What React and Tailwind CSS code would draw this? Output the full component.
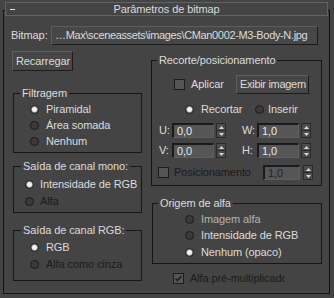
// Parâmetros de bitmap — 3ds Max style rollout, dark UI.

const DIM = 'text-[#1b1b1b]';

function Radio({ on, className = '' }) {
  return (
    <span
      className={`w-[9px] h-[9px] rounded-full border border-[#1a1a1a] flex items-center justify-center shrink-0 ${
        on ? 'bg-[#8e8e8e]' : 'bg-[#3a3a3a]'
      } ${className}`}
    >
      {on && <span className="w-[5px] h-[5px] rounded-full bg-[#f2f2f2]" />}
    </span>
  );
}

function Check({ on, className = '' }) {
  return (
    <span
      className={`w-[11px] h-[11px] border border-[#1c1c1c] bg-[#555555] flex items-center justify-center shrink-0 ${className}`}
    >
      {on && (
        <svg width="9" height="9" viewBox="0 0 9 9">
          <path d="M1.5 4.5 L3.5 6.5 L7.5 2" fill="none" stroke="#1e1e1e" strokeWidth="1.6" />
        </svg>
      )}
    </span>
  );
}

function Spinner() {
  return (
    <span className="w-[10px] h-[15px] flex flex-col border border-[#2a2a2a] bg-[#4c4c4c] shrink-0">
      <span className="flex-1 flex items-center justify-center border-b border-[#2a2a2a]">
        <svg width="5" height="3" viewBox="0 0 5 3"><path d="M0 3 L2.5 0 L5 3 Z" fill="#d8d8d8" /></svg>
      </span>
      <span className="flex-1 flex items-center justify-center">
        <svg width="5" height="3" viewBox="0 0 5 3"><path d="M0 0 L2.5 3 L5 0 Z" fill="#d8d8d8" /></svg>
      </span>
    </span>
  );
}

function Field({ value, w, dim }) {
  return (
    <span
      className={`${w} h-[15px] flex items-center pl-[3px] bg-[#565656] border-t-2 border-l-2 border-t-[#1a1a1a] border-l-[#1a1a1a] border-b border-r border-b-[#5e5e5e] border-r-[#5e5e5e] shrink-0 ${
        dim ? 'text-[#242424]' : 'text-[#e2e8f4]'
      }`}
    >
      {value}
    </span>
  );
}

function Group({ label, className, children, legendClass = 'ml-[6px]' }) {
  return (
    <fieldset className={`border border-[#161616] ${className}`}>
      <legend className={`px-[2px] leading-[13px] ${legendClass}`}>{label}</legend>
      {children}
    </fieldset>
  );
}

function RadioRow({ on, label, radioMl, gap, h = 'h-[16px]', dim, light }) {
  const tone = dim ? DIM : light ? 'text-[#b4b4b4]' : '';
  return (
    <div className={`flex items-center ${h}`}>
      <Radio on={on} className={radioMl} />
      <span className={`${gap} ${tone}`}>{label}</span>
    </div>
  );
}

function Btn({ className, children }) {
  return (
    <div
      className={`flex items-center border border-t-[#5e5e5e] border-l-[#5e5e5e] border-b-[#1c1c1c] border-r-[#1c1c1c] bg-[#474747] ${className}`}
    >
      {children}
    </div>
  );
}

export default function App() {
  return (
    <div className="w-[334px] h-[298px] bg-[#444444] pt-[2px] overflow-hidden text-[11px] leading-[13px] tracking-[-0.1px] text-[#dcdcdc] font-['Liberation_Sans',Arial,sans-serif]">
      {/* rollout title */}
      <div className="relative z-10 ml-[5px] w-[323px] h-[14px] border border-[#626262] bg-[#444444] flex items-center">
        <span className="ml-[4px] w-[5px] h-px bg-[#eeeeee]" />
        <span className="flex-1 text-center pr-[9px]">Parâmetros de bitmap</span>
      </div>

      {/* rollout frame */}
      <div className="-mt-[6px] ml-[3px] w-[327px] h-[284px] border border-[#121212]">
        {/* bitmap path */}
        <div className="mt-[15px] flex items-center">
          <span className="ml-[7px] w-[40px]">Bitmap:</span>
          <Btn className="w-[267px] h-[19px] px-[3px] whitespace-nowrap overflow-hidden tracking-[-0.35px]">
            {'…Max\\sceneassets\\images\\CMan0002-M3-Body-N.jpg'}
          </Btn>
        </div>

        <div className="mt-[6px] flex items-start">
          {/* left column */}
          <div className="ml-[8px] w-[130px] flex flex-col">
            <Btn className="w-[61px] h-[20px] pl-[3px]">Recarregar</Btn>

            <Group label="Filtragem" className="mt-[16px] ml-[1px] w-[129px] h-[66px]">
              <div className="pt-[1px]">
                <RadioRow on label="Piramidal" radioMl="ml-[16px]" gap="ml-[7px]" />
                <RadioRow label="Área somada" radioMl="ml-[16px]" gap="ml-[7px]" />
                <RadioRow label="Nenhum" radioMl="ml-[16px]" gap="ml-[7px]" />
              </div>
            </Group>

            <Group label="Saída de canal mono:" className="mt-[7px] ml-[1px] w-[129px] h-[53px]" legendClass="ml-[7px]">
              <div className="pt-[3px]">
                <RadioRow on label="Intensidade de RGB" radioMl="ml-[11px]" gap="ml-[6px]" h="h-[17px]" />
                <RadioRow label="Alfa" radioMl="ml-[11px]" gap="ml-[6px]" h="h-[17px]" dim />
              </div>
            </Group>

            <Group label="Saída de canal RGB:" className="mt-[11px] ml-[1px] w-[129px] h-[57px]" legendClass="ml-[7px]">
              <div className="pt-[2px]">
                <RadioRow on label="RGB" radioMl="ml-[16px]" gap="ml-[7px]" h="h-[17px]" />
                <RadioRow label="Alfa como cinza" radioMl="ml-[16px]" gap="ml-[7px]" h="h-[17px]" dim />
              </div>
            </Group>
          </div>

          {/* right column */}
          <div className="ml-[9px] w-[171px] flex flex-col">
            <Group label="Recorte/posicionamento" className="mt-[3px] w-[171px] h-[132px]" legendClass="ml-[5px]">
              <div className="mt-[8px] flex items-center h-[19px]">
                <Check className="ml-[22px]" />
                <span className="ml-[6px] w-[45px]">Aplicar</span>
                <Btn className="w-[73px] h-[19px] pl-[3px] whitespace-nowrap tracking-[-0.3px]">Exibir imagem</Btn>
              </div>

              <div className="mt-[7px] flex items-center h-[16px]">
                <Radio on className="ml-[33px]" />
                <span className="ml-[7px] w-[54px]">Recortar</span>
                <Radio />
                <span className="ml-[4px]">Inserir</span>
              </div>

              <div className="mt-[6px] flex items-center h-[15px]">
                <span className="ml-[7px] w-[13px]">U:</span>
                <Field value="0,0" w="w-[42px]" />
                <span className="ml-[2px]"><Spinner /></span>
                <span className="ml-[16px] w-[15px]">W:</span>
                <Field value="1,0" w="w-[42px]" />
                <span className="ml-[2px]"><Spinner /></span>
              </div>

              <div className="mt-[5px] flex items-center h-[15px]">
                <span className="ml-[7px] w-[13px]">V:</span>
                <Field value="0,0" w="w-[42px]" />
                <span className="ml-[2px]"><Spinner /></span>
                <span className="ml-[16px] w-[15px]">H:</span>
                <Field value="1,0" w="w-[42px]" />
                <span className="ml-[2px]"><Spinner /></span>
              </div>

              <div className="mt-[7px] flex items-center h-[15px]">
                <Check className="ml-[6px]" />
                <span className={`ml-[5px] w-[89px] ${DIM}`}>Posicionamento</span>
                <Field value="1,0" w="w-[37px]" dim />
                <span className="ml-[3px]"><Spinner /></span>
              </div>
            </Group>

            <Group label="Origem de alfa" className="mt-[11px] ml-[1px] w-[170px] h-[67px]" legendClass="ml-[5px]">
              <div className="pt-[1px]">
                <RadioRow label="Imagem alfa" radioMl="ml-[32px]" gap="ml-[7px]" light />
                <RadioRow label="Intensidade de RGB" radioMl="ml-[32px]" gap="ml-[7px]" />
                <div className="mt-[1px]">
                  <RadioRow on label="Nenhum (opaco)" radioMl="ml-[32px]" gap="ml-[7px]" />
                </div>
              </div>
            </Group>

            <div className="mt-[9px] flex items-center h-[11px]">
              <Check on className="ml-[22px]" />
              <span className={`ml-[6px] w-[95px] overflow-hidden whitespace-nowrap ${DIM}`}>
                Alfa pré-multiplicado
              </span>
            </div>
          </div>
        </div>
      </div>
    </div>
  );
}
